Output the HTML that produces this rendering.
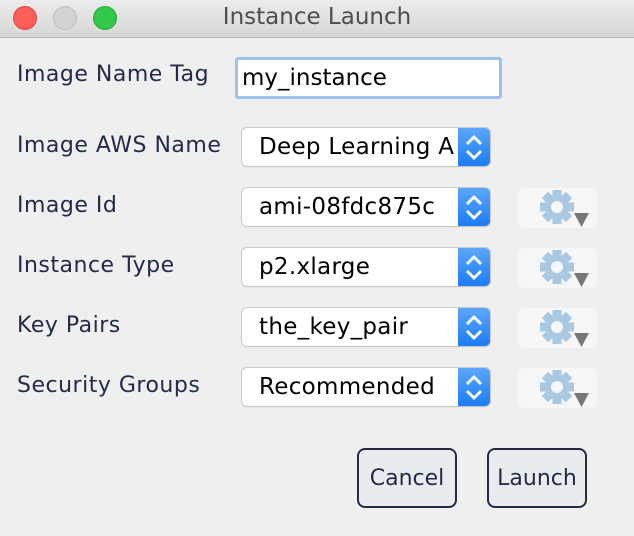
<!DOCTYPE html><html><head><style>
body{margin:0;width:634px;height:536px;background:#efefef;font-family:"DejaVu Sans","Liberation Sans",sans-serif;position:relative;overflow:hidden}
.tb{position:absolute;left:0;top:0;width:634px;height:37px;background:linear-gradient(#ececec,#d6d6d6);border-bottom:1px solid #b9b9b9}
.dot{position:absolute;top:6px;width:24px;height:24px;border-radius:50%}
.title{position:absolute;top:4px;left:0;width:634px;text-align:center;font-size:23px;color:#4d4d4d}
.lbl{position:absolute;left:17px;font-size:22px;letter-spacing:0.5px;color:#232b4a}
.tf{position:absolute;left:235px;top:57px;width:257px;height:36px;background:#fff;border:3px solid #9cc3f0;border-radius:3px;font-size:23px;line-height:37px;padding-left:4px;box-sizing:content-box;color:#000}
.sel{position:absolute;left:242px;width:248px;height:38px;background:#fff;border-radius:5px;box-shadow:0 0 0 1px #c8c8c8,0 1px 1px #bbb;overflow:hidden}
.sel span{position:absolute;left:17px;top:6px;font-size:23px;letter-spacing:0.3px;color:#000;white-space:nowrap}
.st{position:absolute;right:0;top:0;width:32px;height:38px;background:linear-gradient(#5aa7fb,#1d7cf5)}
.gb{position:absolute;left:517px;width:80px;height:40px;background:#f6f6f6;border-radius:8px}
.btn{position:absolute;top:448px;width:96px;height:56px;border:2px solid #252a45;border-radius:8px;background:#e9ecee;font-size:22px;color:#232b4a;text-align:center;line-height:58px}
</style></head><body>
<div class="tb"><div class="dot" style="left:13px;background:#fc5f57;border:1px solid #e0443e;box-sizing:border-box"></div><div class="dot" style="left:53px;background:#d3d3d3;border:1px solid #bdbdbd;box-sizing:border-box"></div><div class="dot" style="left:93px;background:#34c84a;border:1px solid #27a83a;box-sizing:border-box"></div><div class="title">Instance Launch</div></div>
<div class="lbl" style="top:62px">Image Name Tag</div>
<div class="tf">my_instance</div>
<div class="lbl" style="top:133px">Image AWS Name</div>
<div class="lbl" style="top:193px">Image Id</div>
<div class="lbl" style="top:253px">Instance Type</div>
<div class="lbl" style="top:313px">Key Pairs</div>
<div class="lbl" style="top:373px">Security Groups</div>
<svg width="0" height="0" style="position:absolute"><defs>
<symbol id="ar" viewBox="0 0 32 38"><path d="M9 16 L16 9 L23 16 M9 23 L16 30 L23 23" fill="none" stroke="#fff" stroke-width="2.8"/></symbol>
<symbol id="g" viewBox="0 0 80 40"><g transform="translate(40,19)" fill="#a9c8e2"><circle r="12"/><g id="t"><rect x="-4.5" y="-17" width="9" height="34"/><rect x="-17" y="-4.5" width="34" height="9"/></g><use href="#t" transform="rotate(45)"/></g><circle cx="40" cy="19" r="6" fill="#f6f6f6"/><path d="M57 25 L72 25 L64.5 39 Z" fill="#777"/></symbol>
</defs></svg>
<div class="sel" style="top:128px"><span>Deep Learning A</span><div class="st"><svg width="32" height="38"><use href="#ar"/></svg></div></div>
<div class="sel" style="top:188px"><span>ami-08fdc875c</span><div class="st"><svg width="32" height="38"><use href="#ar"/></svg></div></div>
<div class="sel" style="top:248px"><span>p2.xlarge</span><div class="st"><svg width="32" height="38"><use href="#ar"/></svg></div></div>
<div class="sel" style="top:308px"><span>the_key_pair</span><div class="st"><svg width="32" height="38"><use href="#ar"/></svg></div></div>
<div class="sel" style="top:368px"><span>Recommended</span><div class="st"><svg width="32" height="38"><use href="#ar"/></svg></div></div>
<div class="gb" style="top:188px"><svg width="80" height="40"><use href="#g"/></svg></div>
<div class="gb" style="top:248px"><svg width="80" height="40"><use href="#g"/></svg></div>
<div class="gb" style="top:308px"><svg width="80" height="40"><use href="#g"/></svg></div>
<div class="gb" style="top:368px"><svg width="80" height="40"><use href="#g"/></svg></div>
<div class="btn" style="left:357px">Cancel</div>
<div class="btn" style="left:487px">Launch</div>
</body></html>
